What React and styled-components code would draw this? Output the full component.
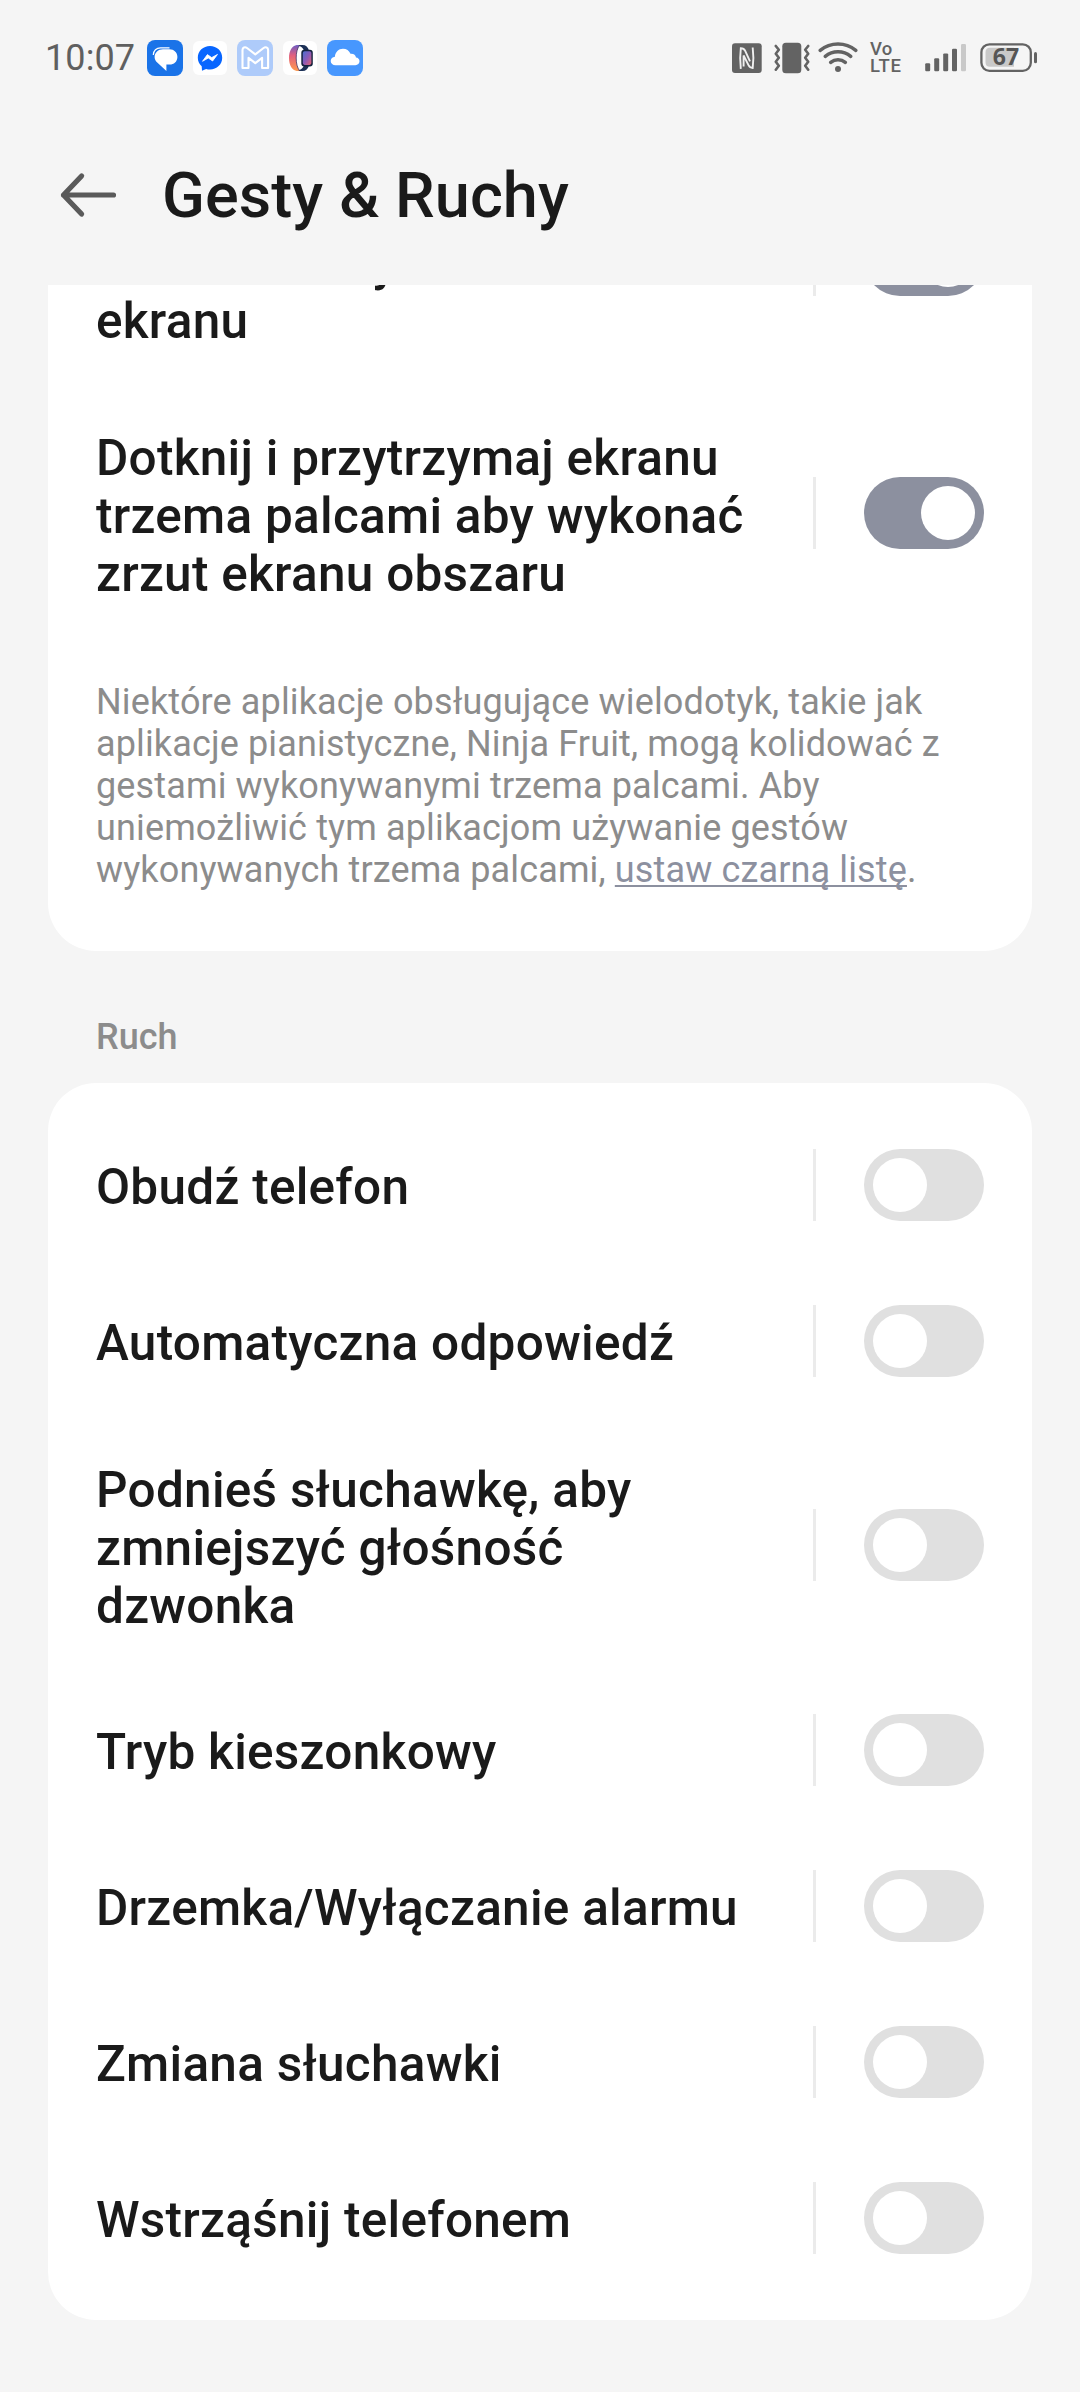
import React from 'react'
import styled, { createGlobalStyle } from 'styled-components'

const lockedRows = [
  {
    // the first line of this one is scrolled under the header
    label: ['\u00a0', 'dół w celu wykonania zrzutu', 'ekranu'],
    on: true,
  },
  {
    label: [
      'Dotknij i przytrzymaj ekranu',
      'trzema palcami aby wykonać',
      'zrzut ekranu obszaru',
    ],
    on: true,
  },
]

const motionRows = [
  { label: ['Obudź telefon'] },
  { label: ['Automatyczna odpowiedź'] },
  { label: ['Podnieś słuchawkę, aby', 'zmniejszyć głośność', 'dzwonka'] },
  { label: ['Tryb kieszonkowy'] },
  { label: ['Drzemka/Wyłączanie alarmu'] },
  { label: ['Zmiana słuchawki'] },
  { label: ['Wstrząśnij telefonem'] },
]

const note = [
  'Niektóre aplikacje obsługujące wielodotyk, takie jak',
  'aplikacje pianistyczne, Ninja Fruit, mogą kolidować z',
  'gestami wykonywanymi trzema palcami. Aby',
  'uniemożliwić tym aplikacjom używanie gestów',
]

// notification icons on the left of the status bar
const MessagesIcon = () => (
  <Icon width='36' height='36' viewBox='0 0 36 36'>
    <rect width='36' height='36' rx='8' fill='#1a73e8' />
    <path
      d='M6.3 15C6.300 10.500 9.500 7.800 13.500 7.800h9'
      fill='none'
      stroke='#fff'
      strokeWidth='1.2'
    />
    <path
      d='M16 9.200h6.500c4.400 0 7.900 3.200 7.900 7.700s-3.500 7.600-7.700 7.600h-3.300v6.500L10.500 22.800C8.500 21.200 7.600 19.200 7.600 17c0-4.400 3.700-7.800 8.400-7.800z'
      fill='#fff'
    />
  </Icon>
)

const MessengerIcon = () => (
  <Icon width='36' height='36' viewBox='0 0 36 36'>
    <rect x='1' y='1' width='34' height='34' rx='6' fill='#fff' />
    <path
      d='M18 6C11.200 6 5.800 11 5.800 17.700c0 3.500 1.500 6.500 3.900 8.600l.3 4.500 4.100-1.900c1.200.4 2.500.5 3.900.5 6.800 0 12.200-5 12.200-11.700S24.800 6 18 6z'
      fill='#0866ff'
    />
    <path
      d='M10.500 21.300l4.900-6.700 4.300 3 5.800-3.200-4.900 6.600-4.300-3z'
      fill='#fff'
      stroke='#fff'
      strokeWidth='.8'
      strokeLinejoin='round'
    />
  </Icon>
)

const MailIcon = () => (
  <Icon width='36' height='36' viewBox='0 0 36 36'>
    <rect width='36' height='36' rx='8' fill='#aecbfa' />
    <path
      d='M5.500 28V10c0-2.600 2.500-3.400 4.500-2l8.300 6.300L26.600 8c2-1.400 4.500-.6 4.500 2v18h-6V17.800l-6.800 5.300-6.800-5.300V28z'
      fill='none'
      stroke='#fff'
      strokeWidth='2.1'
      strokeLinejoin='round'
    />
  </Icon>
)

const WatchIcon = () => (
  <Icon width='36' height='36' viewBox='0 0 36 36'>
    <defs>
      <linearGradient id='band' x1='0' y1='0' x2='0' y2='1'>
        <stop offset='0' stopColor='#6d5cc4' />
        <stop offset='.4' stopColor='#e2607e' />
        <stop offset='1' stopColor='#ff9a4d' />
      </linearGradient>
      <linearGradient id='face' x1='0' y1='0' x2='1' y2='1'>
        <stop offset='0' stopColor='#4a6fd0' />
        <stop offset='.5' stopColor='#8b5ab8' />
        <stop offset='1' stopColor='#e5626f' />
      </linearGradient>
    </defs>
    <rect x='1' y='1' width='34' height='34' rx='6' fill='#fff' />
    <path
      d='M14 5h6.500c3.500 0 5.500 2 6.500 5.500l-5 .5c-.8-2.500-2-4-4-4.800zM14 31h6.500c3.500 0 5.500-2 6.500-5.500l-5-.5c-.8 2.500-2 4-4 4.800z'
      fill='#1d3157'
    />
    <path
      d='M15 5c-5 .6-8 5.800-8 13s3 12.400 8 13l2.500-.4c-2.300-3-3.300-7.300-3.300-12.600s1-9.600 3.300-12.600z'
      fill='url(#band)'
    />
    <path
      d='M17.500 5.400c-2.300 3-3.300 7.300-3.300 12.600s1 9.600 3.300 12.600'
      fill='none'
      stroke='#3d3566'
      strokeWidth='.8'
    />
    <rect x='19.3' y='9.800' width='11.500' height='16.600' rx='3' fill='#14223f' />
    <rect x='20.800' y='11.300' width='8.600' height='13.600' rx='1.800' fill='url(#face)' />
  </Icon>
)

const CloudIcon = () => (
  <Icon width='36' height='36' viewBox='0 0 36 36'>
    <rect width='36' height='36' rx='8' fill='#4797fe' />
    <path
      d='M8.500 25.200c-2.700 0-4.800-1.700-4.800-4.200 0-2.400 1.800-4.200 4.200-4.300C8.300 12.100 11.600 8.700 16 8.700c3.500 0 6.200 1.900 7.500 5 3.200-.3 5.200 1.400 5.500 3.900 2.100.2 3.500 1.600 3.500 3.700 0 2.300-1.700 3.900-4.100 3.900z'
      fill='#fff'
    />
  </Icon>
)

// system icons on the right
const NfcIcon = () => (
  <Icon width='30' height='36' viewBox='0 0 30 36'>
    <rect y='3.300' width='29.700' height='29.600' rx='3' fill='#636363' />
    <path
      d='M8.800 28.800C8 22 8 14.500 8.800 8.300c2.200 0 3.400.5 4.400 2.500l4.800 10.500M20.700 7.500c.9 7 .9 14 0 20.500-2 0-3.200-.8-4.200-2.800l-4.900-9.800V26.500'
      fill='none'
      stroke='#f0f0f0'
      strokeWidth='1.900'
    />
  </Icon>
)

const VibrateIcon = () => (
  <Icon width='36' height='36' viewBox='0 0 36 36'>
    <rect x='8.300' y='2.700' width='19' height='30.600' rx='3.500' fill='#636363' />
    <path
      d='M1.800 6l3 3.700-3 4 3 4-3 4 3 4-3 4M34.200 6l-3 3.700 3 4-3 4 3 4-3 4 3 4'
      fill='none'
      stroke='#636363'
      strokeWidth='2.600'
      strokeLinejoin='round'
      strokeLinecap='round'
    />
  </Icon>
)

const WifiIcon = () => (
  <Icon width='40' height='36' viewBox='0 0 40 36'>
    <path
      d='M2.200 10.300a28 28 0 0 1 35.600 0M7.300 16.300a20 20 0 0 1 25.400 0M12.700 22.300a11.500 11.500 0 0 1 14.600 0'
      fill='none'
      stroke='#636363'
      strokeWidth='3.500'
      strokeLinecap='round'
    />
    <circle cx='20' cy='29' r='3' fill='#636363' />
  </Icon>
)

const VolteIcon = () => (
  <Volte>
    <span>Vo</span>
    <span>LTE</span>
  </Volte>
)

const SignalIcon = () => (
  <Icon width='41' height='36' viewBox='0 0 41 36'>
    <g fill='#636363'>
      <rect x='.2' y='23.300' width='5' height='8' rx='1.200' />
      <rect x='9.200' y='18.300' width='5' height='13' rx='1.200' />
      <rect x='18.200' y='13.400' width='5' height='17.900' rx='1.200' />
      <rect x='27' y='8.700' width='5' height='22.600' rx='1.200' />
    </g>
    <rect x='36' y='4' width='5' height='27.300' rx='1.200' fill='#c9c9c9' />
  </Icon>
)

const BatteryIcon = () => (
  <BatteryLabel width='58' height='36' viewBox='0 0 58 36'>
    <path
      d='M10 7.700h24v19H10c-3 0-4.500-1.500-4.500-4.500v-10c0-3 1.500-4.500 4.500-4.500z'
      fill='#c9c9c9'
    />
    <rect
      x='1.400'
      y='4.300'
      width='49.400'
      height='26.500'
      rx='8'
      fill='none'
      stroke='#636363'
      strokeWidth='2.300'
    />
    <rect x='54' y='12' width='3' height='11.300' rx='1.500' fill='#636363' />
    <text x='26' y='25.300' textAnchor='middle'>
      67
    </text>
  </BatteryLabel>
)

const BackArrow = () => (
  <Icon width='60' height='48' viewBox='0 0 60 48'>
    <path
      d='M23.600 5L5.500 24l18.100 19M5.500 24h50'
      fill='none'
      stroke='#5a5a5a'
      strokeWidth='5.200'
      strokeLinecap='round'
      strokeLinejoin='round'
    />
  </Icon>
)

const SettingRow = ({ label, on }) => {
  const tall = label.length > 1
  return (
    <Row $tall={tall}>
      <Label $tall={tall}>
        {label.map((line) => (
          <span key={line}>{line}</span>
        ))}
      </Label>
      <Divider />
      <Switch role='switch' aria-checked={!!on} $on={on}>
        <Knob />
      </Switch>
    </Row>
  )
}

const App = () => {
  return (
    <Screen>
      <GlobalStyle />
      <StatusBar>
        <Clock>10:07</Clock>
        <Notifications>
          <MessagesIcon />
          <MessengerIcon />
          <MailIcon />
          <WatchIcon />
          <CloudIcon />
        </Notifications>
        <System>
          <NfcIcon />
          <VibrateIcon />
          <WifiIcon />
          <VolteIcon />
          <SignalIcon />
          <BatteryIcon />
        </System>
      </StatusBar>
      <Header>
        <BackArrow />
        <h1>Gesty &amp; Ruchy</h1>
      </Header>
      <Content>
        <Card $scrolled>
          {lockedRows.map((row) => (
            <SettingRow key={row.label[1]} {...row} />
          ))}
          <Note>
            {note.map((line) => (
              <span key={line}>{line}</span>
            ))}
            <span>
              wykonywanych trzema palcami, <a>ustaw czarną listę</a>.
            </span>
          </Note>
        </Card>
        <SectionTitle>Ruch</SectionTitle>
        <Card>
          {motionRows.map((row) => (
            <SettingRow key={row.label[0]} {...row} />
          ))}
        </Card>
      </Content>
    </Screen>
  )
}

const GlobalStyle = createGlobalStyle`
  * {
    box-sizing: border-box;
  }
  body {
    margin: 0;
    background: #f5f5f5;
    font-family: Roboto, 'Liberation Sans', sans-serif;
  }
`

const Screen = styled.main`
  display: flex;
  flex-direction: column;
  width: 1080px;
  height: 2392px;
  overflow: hidden;
  background: #f5f5f5;
  color: #1a1a1a;
`

const Icon = styled.svg`
  display: block;
  flex: none;
`

const Volte = styled.div`
  display: flex;
  flex-direction: column;
  width: 32px;
  height: 36px;
  padding-top: 1px;
  font-size: 18.5px;
  font-weight: 500;
  line-height: 17px;
  letter-spacing: 0.3px;
  color: #636363;
  span:last-child {
    letter-spacing: 0.8px;
  }
`

const BatteryLabel = styled(Icon)`
  text {
    font: 700 23px 'Open Sans', sans-serif;
    fill: #555;
  }
`

const StatusBar = styled.div`
  display: flex;
  align-items: center;
  height: 116px;
  padding: 0 42px 0 45px;
`

const Clock = styled.span`
  width: 102px;
  font-size: 36px;
  line-height: 42px;
  letter-spacing: 0.1px;
  color: #5f5f5f;
`

const Notifications = styled.div`
  display: flex;
  gap: 9px;
`

const System = styled.div`
  display: flex;
  margin-left: auto;
  gap: 12px;
  svg:nth-child(3) {
    margin: 0 0 0 -4px;
  }
  svg:nth-child(5) {
    margin: 0 2px 0 11px;
  }
`

const Header = styled.header`
  display: flex;
  align-items: center;
  gap: 44px;
  height: 169px;
  padding: 0 58px 11px;
  h1 {
    margin: 0;
    padding-top: 2px;
    font-size: 63px;
    font-weight: 500;
    line-height: 74px;
    letter-spacing: 0.06px;
  }
`

const Content = styled.div`
  display: flex;
  flex: 1;
  flex-direction: column;
  padding: 0 48px;
  overflow: hidden;
`

const Card = styled.section`
  flex: none;
  padding: ${(props) => (props.$scrolled ? '0 0 60px' : '24px 0')};
  margin-top: ${(props) => (props.$scrolled ? '-151px' : '0')};
  border-radius: 48px;
  background: #fff;
`

const Row = styled.div`
  display: flex;
  align-items: center;
  min-height: 156px;
  padding: ${(props) => (props.$tall ? '36px 48px 37px' : '36px 48px')};
`

const Label = styled.div`
  flex: 1;
  padding-top: ${(props) => (props.$tall ? '6px' : '4px')};
  font-size: 49.5px;
  font-weight: 500;
  line-height: 58px;
  letter-spacing: 0.27px;
  white-space: nowrap;
  span {
    display: block;
  }
`

const Divider = styled.div`
  width: 3px;
  height: 72px;
  margin-right: 48px;
  background: #ebebeb;
`

const Switch = styled.div`
  display: flex;
  justify-content: ${(props) => (props.$on ? 'flex-end' : 'flex-start')};
  width: 120px;
  height: 72px;
  padding: 9px;
  border-radius: 36px;
  background: ${(props) => (props.$on ? '#8c909f' : '#e0e0e0')};
`

const Knob = styled.div`
  width: 54px;
  height: 54px;
  border-radius: 50%;
  background: #fff;
`

const Note = styled.p`
  margin: 0;
  padding: 41px 48px 0;
  font-size: 36px;
  line-height: 42px;
  letter-spacing: 0.14px;
  color: #8c8c8c;
  white-space: nowrap;
  span {
    display: block;
  }
  a {
    color: #8c909f;
    text-decoration: underline;
    text-decoration-thickness: 2px;
    text-underline-offset: 3px;
    text-decoration-skip-ink: none;
  }
`

const SectionTitle = styled.h2`
  flex: none;
  height: 132px;
  margin: 0;
  padding: 65px 48px 0;
  font-size: 36px;
  font-weight: 500;
  line-height: 42px;
  color: #8c8c8c;
`

export default App
